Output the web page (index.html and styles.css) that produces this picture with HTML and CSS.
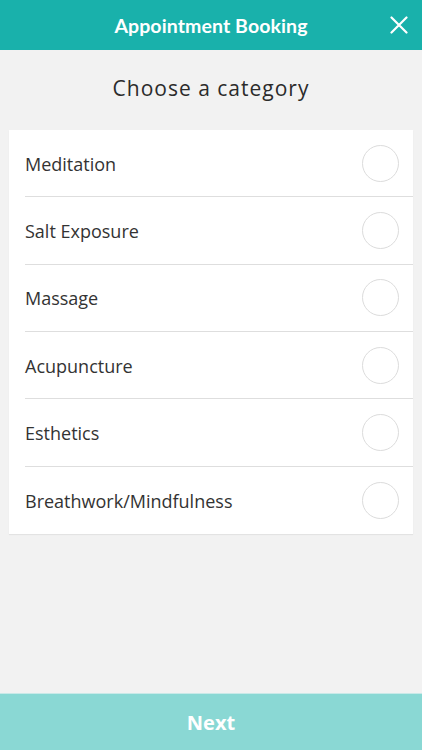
FILE: index.html
```html
<!DOCTYPE html>
<html lang="en">
<head>
<meta charset="utf-8">
<title>Appointment Booking</title>
<link rel="stylesheet" href="styles.css">
</head>
<body>
<div class="app">
  <header class="topbar">
    <h1 class="topbar-title">Appointment Booking</h1>
    <button class="close-btn" aria-label="Close">
      <svg width="18" height="18" viewBox="0 0 18 18"><path d="M1.5 1.5 L16.5 16.5 M16.5 1.5 L1.5 16.5" stroke="#fff" stroke-width="2.2" stroke-linecap="round" fill="none"/></svg>
    </button>
  </header>
  <main class="content">
    <h2 class="heading">Choose a category</h2>
    <ul class="card">
      <li class="row"><span class="label">Meditation</span><span class="radio"></span></li>
      <li class="row"><span class="label">Salt Exposure</span><span class="radio"></span></li>
      <li class="row"><span class="label">Massage</span><span class="radio"></span></li>
      <li class="row"><span class="label">Acupuncture</span><span class="radio"></span></li>
      <li class="row"><span class="label">Esthetics</span><span class="radio"></span></li>
      <li class="row"><span class="label">Breathwork/Mindfulness</span><span class="radio"></span></li>
    </ul>
  </main>
  <footer class="footer">
    <button class="next-btn">Next</button>
  </footer>
</div>
</body>
</html>
```
FILE: styles.css
```css
* { box-sizing: border-box; }
html, body { margin: 0; padding: 0; }
body {
  background: #f2f2f2;
  font-family: "Open Sans", "Noto Sans", sans-serif;
  color: #333;
}
.app {
  width: 422px;
  height: 750px;
  display: flex;
  flex-direction: column;
}
.topbar {
  height: 50px;
  background: #19b1ab;
  display: flex;
  align-items: center;
  justify-content: center;
  position: relative;
}
.topbar-title {
  margin: 0;
  color: #fff;
  font-family: "Lato", "Open Sans", sans-serif;
  font-weight: 700;
  font-size: 19.5px;
  letter-spacing: 0.1px;
}
.close-btn {
  position: absolute;
  right: 14px;
  top: 16px;
  background: none;
  border: 0;
  padding: 0;
  width: 18px;
  height: 18px;
  display: block;
}
.close-btn svg { display: block; }
.content {
  flex: 1;
  display: flex;
  flex-direction: column;
}
.heading {
  margin: 0;
  height: 80px;
  display: flex;
  align-items: center;
  justify-content: center;
  padding-bottom: 4px;
  font-weight: 400;
  font-size: 21px;
  letter-spacing: 1px;
  color: #2b2b2b;
}
.card {
  list-style: none;
  margin: 0 9px;
  padding: 0;
  background: #fff;
  box-shadow: 0 1px 1px rgba(0,0,0,0.06);
}
.row {
  height: 67.33px;
  display: flex;
  align-items: center;
  justify-content: space-between;
  margin-left: 16px;
  padding-right: 14px;
  padding-top: 1px;
  border-bottom: 1px solid #dedede;
}
.row:last-child { border-bottom: 0; }
.label {
  font-size: 18px;
  color: #333;
}
.radio {
  width: 37px;
  height: 37px;
  border-radius: 50%;
  border: 1px solid #dcdcdc;
  margin-top: -1px;
}
.footer {
  height: 57px;
  background: #8ad8d4;
  border-top: 1px solid #c9e9e8;
  display: flex;
}
.next-btn {
  flex: 1;
  background: none;
  border: 0;
  color: #fff;
  font-family: "Open Sans", sans-serif;
  font-weight: 700;
  font-size: 20px;
}
```
